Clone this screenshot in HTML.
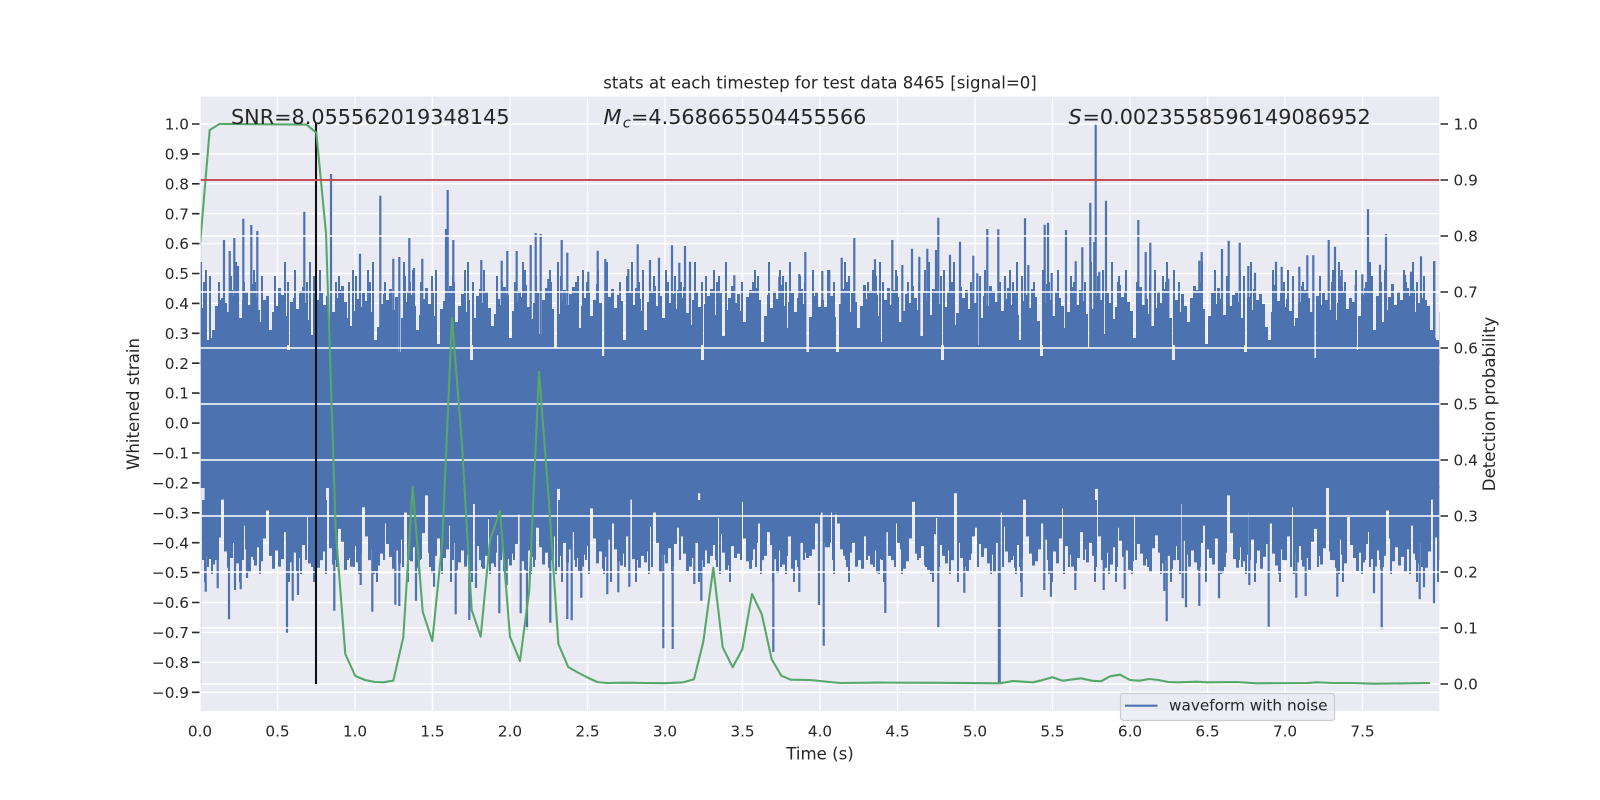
<!DOCTYPE html>
<html>
<head>
<meta charset="utf-8">
<title>stats at each timestep</title>
<style>
html,body{margin:0;padding:0;background:#fff;width:1600px;height:800px;overflow:hidden}
svg{display:block}
text{font-family:"DejaVu Sans","Liberation Sans",sans-serif;fill:#262626}
.t{font-size:15.28px}
.l{font-size:16.6px}
.b{font-size:20.77px}
.i{font-style:italic}
</style>
</head>
<body>
<svg xmlns="http://www.w3.org/2000/svg" width="1600" height="800" viewBox="0 0 1600 800">
<defs>
<clipPath id="ax"><rect x="200.7" y="96.6" width="1238.6" height="614.4"/></clipPath>
<path id="env" d="M0 365V308h3V312h3V340h3V338h3V330h3V306h3V300h3V298h3V303h3V312h3V290h3V296h3V288h3V318h3V300h3V292h3V305h3V284h3V297h3V310h3V322h3V300h3V296h3V330h3V312h3V306h3V288h3V295h3V316h3V350h3V302h3V298h3V309h3V291h3V287h3V303h3V320h3V335h3V310h3V300h3V293h3V305h3V296h3V358h3V312h3V298h3V290h3V286h3V302h3V318h3V326h3V311h3V299h3V307h3V293h3V301h3V285h3V312h3V340h3V327h3V304h3V294h3V300h3V289h3V310h3V297h3V352h3V318h3V302h3V291h3V295h3V306h3V330h3V315h3V299h3V288h3V304h3V293h3V316h3V344h3V309h3V301h3V290h3V286h3V298h3V322h3V306h3V294h3V312h3V300h3V362h3V318h3V296h3V289h3V303h3V292h3V308h3V326h3V314h3V299h3V305h3V287h3V295h3V338h3V311h3V302h3V291h3V297h3V285h3V307h3V319h3V303h3V293h3V334h3V300h3V288h3V296h3V309h3V348h3V314h3V301h3V290h3V305h3V294h3V287h3V312h3V328h3V306h3V298h3V292h3V316h3V300h3V284h3V303h3V356h3V321h3V297h3V289h3V308h3V295h3V301h3V340h3V315h3V293h3V305h3V288h3V299h3V311h3V330h3V302h3V291h3V286h3V306h3V296h3V318h3V345h3V303h3V294h3V309h3V290h3V298h3V287h3V313h3V325h3V300h3V292h3V307h3V366h3V304h3V296h3V289h3V315h3V301h3V293h3V336h3V310h3V298h3V286h3V303h3V294h3V311h3V322h3V297h3V290h3V305h3V288h3V300h3V342h3V316h3V295h3V308h3V291h3V299h3V285h3V306h3V328h3V302h3V293h3V312h3V298h3V289h3V304h3V352h3V317h3V296h3V292h3V307h3V300h3V365Z"/>
</defs>
<rect x="0" y="0" width="1600" height="800" fill="#fff"/>
<rect x="200.7" y="96.6" width="1238.6" height="614.4" fill="#eaeaf2"/>
<!-- left axes grid -->
<g clip-path="url(#ax)">
<path stroke="#fff" stroke-width="1.39" fill="none" d="M277.5 96V712M355 96V712M432.5 96V712M510 96V712M587.5 96V712M665 96V712M742.5 96V712M820 96V712M897.5 96V712M975 96V712M1052.5 96V712M1130 96V712M1207.5 96V712M1285 96V712M1362.5 96V712
M200 124H1440M200 153.9H1440M200 183.8H1440M200 213.7H1440M200 243.6H1440M200 273.5H1440M200 303.4H1440M200 333.3H1440M200 363.2H1440M200 393.1H1440M200 423.1H1440M200 453H1440M200 482.9H1440M200 512.8H1440M200 542.7H1440M200 572.6H1440M200 602.5H1440M200 632.4H1440M200 662.3H1440M200 692.3H1440"/>
<!-- waveform -->
<rect x="200" y="360" width="1240" height="128" fill="#4c72b0"/>
<g fill="#4c72b0">
<use href="#env" transform="translate(200 0)"/>
<use href="#env" transform="translate(1445 0) scale(-1 1)"/>
<use href="#env" transform="translate(830 0) translate(0 423) scale(-1 -1.08) translate(0 -423)"/>
<use href="#env" transform="translate(825 0) translate(0 423) scale(1 -1.08) translate(0 -423)"/>
</g>
<!-- mid-height columns, top -->
<g fill="none" stroke="#4c72b0">
<path stroke-width="83" stroke-dasharray="2 33 2 47 2 23 2 61 2 29 2 41 2 19 2 53" d="M200 303.5H1440"/>
<path stroke-width="75" stroke-dasharray="2 27 2 17 2 39 2 23 2 31 2 13 2 43 2 21" d="M205 307.5H1440"/>
<path stroke-width="69" stroke-dasharray="2 19 2 29 2 11 2 37 2 23 2 15 2 47 2 25" d="M209 310.5H1440"/>
<path stroke-width="63" stroke-dasharray="2 13 2 23 2 9 2 31 2 17 2 27 2 11 2 19" d="M203 313.5H1440"/>
<!-- mid-length columns, bottom -->
<path stroke-width="60" stroke-dasharray="2 13 2 23 2 9 2 31 2 17 2 27 2 11 2 19" d="M202 530H1440"/>
<path stroke-width="67" stroke-dasharray="2 19 2 29 2 11 2 37 2 23 2 15 2 47 2 25" d="M207 533.5H1440"/>
<path stroke-width="74" stroke-dasharray="2 27 2 17 2 39 2 23 2 31 2 13 2 43 2 21" d="M211 537H1440"/>
<path stroke-width="82" stroke-dasharray="2 33 2 47 2 23 2 61 2 29 2 41 2 19 2 53" d="M204 541H1440"/>
</g>
<path fill="none" stroke="#4c72b0" stroke-width="2.2" d="M331 423V174M380.3 423V195.7M447.7 423V190M446 423V229M453.3 423V240M243.3 423V218.7M251.3 423V225M257.3 423V231M304.3 423V211.7M224 423V240M234.3 423V238M229.7 423V251M238 423V266M360 423V253.7M409.3 423V238M422.3 423V258.7M414 423V268M393.3 423V258.7M399.3 423V257M530.7 423V245M535.7 423V233M481.3 423V260M501.7 423V260.7M507.3 423V251M516.7 423V251
M540.7 423V234M561.7 423V240M567.3 423V252.7M548.3 423V279M597.7 423V250.7M605.3 423V259M588.3 423V271.7M628.3 423V269M637.7 423V244.3M650 423V260M659 423V257.7M672 423V245.3M685 423V246M679.3 423V262.7M690 423V261.7M734.3 423V275.3M779.3 423V276.7M805.3 423V252M799.3 423V274M822.3 423V271M829.3 423V270M841.7 423V257.7M854.3 423V238M875 423V259.3M892.3 423V240M902.3 423V265M912 423V248.7M919.3 423V256.7M927.3 423V248.7M938.3 423V217.7M936 423V250M950 423V254.7M960 423V241.7M973.3 423V255.7M987.3 423V229M998.3 423V229.3M977.3 423V273.3M1005 423V278.7
M1025 423V218.3M1044.7 423V224.7M1048 423V222.7M1066 423V230M1051.7 423V273M1028.3 423V265M1075.7 423V261.3M1082.3 423V247.3M1090.3 423V202.7M1095.7 423V123.3M1094.3 423V242M1106 423V200.7M1099.3 423V271.7M1138.3 423V220M1145.7 423V252M1150.3 423V242.7M1168.3 423V278.7M1201.7 423V252M1199.3 423V260.7M1222 423V249M1228.7 423V240.7M1239.7 423V242.7M1248.3 423V266M1255 423V272.7M1276 423V261.7M1281.7 423V266.7M1299.3 423V266.7M1307.3 423V255.3M1313.3 423V255.3M1328.7 423V240M1335 423V246.7M1341.7 423V270M1355.7 423V284.7M1362.3 423V274.3M1368 423V209.3M1380 423V264.7M1386 423V234M1421 423V256.3M1434.3 423V261M1405 423V275M1411 423V271.7
M205.7 423V591.7M210 423V559M229 423V619.3M217.7 423V588.3M235 423V590M240.7 423V589.3M247 423V578M287 423V632.7M292.7 423V600.7M298 423V595M334.3 423V610.7M372.3 423V611.7M360.7 423V585M395.3 423V604.7M399.3 423V606M416 423V600.7M434 423V586.7M455.7 423V614.3M469.3 423V620M476 423V588M499.3 423V613.3M520.7 423V613.3M527 423V629.3M506.7 423V585
M550.3 423V622.7M567.3 423V619M571.7 423V620.3M581.3 423V597.7M607.3 423V594.3M618.3 423V592.3M629.3 423V586.7M663.3 423V648.3M672.7 423V649M701.3 423V600.7M694.3 423V584M773.3 423V652M799.3 423V592M819 423V605M823.7 423V645.7M885.3 423V613M938.3 423V627.3M964.3 423V592.7M1021.7 423V597
M1044.3 423V590M1051 423V596.7M1075.3 423V590M1103.7 423V590M1124.7 423V589.3M1164.3 423V591M1166.7 423V621.3M1182.7 423V598.3M1186 423V607.3M1199.3 423V606M1219 423V598.3M1249.3 423V585M1268.7 423V626.7M1296.3 423V597.7M1305.7 423V596M1337.3 423V596.7M1374 423V593.3M1381.7 423V629.3M1419.7 423V599.3M1424 423V587.3M1434 423V603.3"/>
<rect x="200.7" y="245" width="1" height="439" fill="#4c72b0" opacity="0.15"/>
<path d="M999.3 423V683.5" stroke="#4c72b0" stroke-width="3" fill="none"/>
<!-- right axes grid -->
<path stroke="#fff" stroke-width="1.39" fill="none" d="M200 124H1440M200 180H1440M200 236H1440M200 292H1440M200 348H1440M200 404H1440M200 460H1440M200 516H1440M200 572H1440M200 628H1440M200 684H1440"/>
<!-- black marker, probability curve, threshold -->
<path d="M316 123V684" stroke="#111" stroke-width="2.08" fill="none"/>
<polyline fill="none" stroke="#55a868" stroke-width="2.08" stroke-linejoin="round" points="200,245 209.7,130 219.4,124 229,124 306.5,124.6 316.3,132.7 326,233 335.7,530 345.3,654 355.3,676 365,680 375,682 383,682.3 393.3,680.7 403.3,637.3 412.7,486.7 422.7,611.7 432.3,641 442.2,543 452,318 461.7,440 471.7,610 480.7,636.7 490,540 500,511 510,636.7 520,661 529.3,590 539,372 548.8,499 558.4,644 568.2,667 577.9,672.5 587.5,677.5 597.3,682 607,683 626,682.7 646,683 665,683.2 683.3,682.3 694,679.3 703.3,641.7 713.3,567.7 722.7,647.3 732.7,667.3 742.3,649.3 752,594 761.7,614 771.7,659.3 781.3,675.7 790.7,679.7 810,680 830,682 840,683 880,682.6 940,682.8 1000,683.3 1013,681 1033,682.3 1040,680.7 1052.3,677.3 1062.7,680.7 1081,678.3 1091.7,680.7 1101,681.3 1110,676.3 1120,674.7 1130,680 1139.3,680.7 1149.3,679 1158.3,680 1168.3,682 1178.3,682.3 1196.7,681.7 1206.7,682.3 1236.7,682 1256.7,683.3 1306.7,683 1316.7,682.3 1333.3,683 1353,683 1373,683.7 1430,683"/>
<path d="M200 180H1440" stroke="#c44e52" stroke-width="2.08" fill="none"/>
</g>
<!-- ticks -->
<path stroke="#262626" stroke-width="1.6" fill="none" d="M192 124H199.5M192 153.9H199.5M192 183.8H199.5M192 213.7H199.5M192 243.6H199.5M192 273.5H199.5M192 303.4H199.5M192 333.3H199.5M192 363.2H199.5M192 393.1H199.5M192 423.1H199.5M192 453H199.5M192 482.9H199.5M192 512.8H199.5M192 542.7H199.5M192 572.6H199.5M192 602.5H199.5M192 632.4H199.5M192 662.3H199.5M192 692.3H199.5
M1440.5 124H1448M1440.5 180H1448M1440.5 236H1448M1440.5 292H1448M1440.5 348H1448M1440.5 404H1448M1440.5 460H1448M1440.5 516H1448M1440.5 572H1448M1440.5 628H1448M1440.5 684H1448"/>
<!-- left tick labels -->
<g class="t" text-anchor="end">
<text x="189" y="129.6">1.0</text>
<text x="189" y="159.5">0.9</text>
<text x="189" y="189.4">0.8</text>
<text x="189" y="219.3">0.7</text>
<text x="189" y="249.2">0.6</text>
<text x="189" y="279.1">0.5</text>
<text x="189" y="309">0.4</text>
<text x="189" y="338.9">0.3</text>
<text x="189" y="368.8">0.2</text>
<text x="189" y="398.7">0.1</text>
<text x="189" y="428.7">0.0</text>
<text x="189" y="458.6">−0.1</text>
<text x="189" y="488.5">−0.2</text>
<text x="189" y="518.4">−0.3</text>
<text x="189" y="548.3">−0.4</text>
<text x="189" y="578.2">−0.5</text>
<text x="189" y="608.1">−0.6</text>
<text x="189" y="638">−0.7</text>
<text x="189" y="667.9">−0.8</text>
<text x="189" y="697.9">−0.9</text>
</g>
<!-- right tick labels -->
<g class="t">
<text x="1453.5" y="129.6">1.0</text>
<text x="1453.5" y="185.6">0.9</text>
<text x="1453.5" y="241.6">0.8</text>
<text x="1453.5" y="297.6">0.7</text>
<text x="1453.5" y="353.6">0.6</text>
<text x="1453.5" y="409.6">0.5</text>
<text x="1453.5" y="465.6">0.4</text>
<text x="1453.5" y="521.6">0.3</text>
<text x="1453.5" y="577.6">0.2</text>
<text x="1453.5" y="633.6">0.1</text>
<text x="1453.5" y="689.6">0.0</text>
</g>
<!-- x tick labels -->
<g class="t" text-anchor="middle">
<text x="200" y="736.5">0.0</text>
<text x="277.5" y="736.5">0.5</text>
<text x="355" y="736.5">1.0</text>
<text x="432.5" y="736.5">1.5</text>
<text x="510" y="736.5">2.0</text>
<text x="587.5" y="736.5">2.5</text>
<text x="665" y="736.5">3.0</text>
<text x="742.5" y="736.5">3.5</text>
<text x="820" y="736.5">4.0</text>
<text x="897.5" y="736.5">4.5</text>
<text x="975" y="736.5">5.0</text>
<text x="1052.5" y="736.5">5.5</text>
<text x="1130" y="736.5">6.0</text>
<text x="1207.5" y="736.5">6.5</text>
<text x="1285" y="736.5">7.0</text>
<text x="1362.5" y="736.5">7.5</text>
</g>
<!-- labels -->
<text class="l" x="820" y="88.5" text-anchor="middle">stats at each timestep for test data 8465 [signal=0]</text>
<text class="l" x="820" y="759.5" text-anchor="middle">Time (s)</text>
<text class="l" text-anchor="middle" transform="translate(139 404) rotate(-90)">Whitened strain</text>
<text class="l" text-anchor="middle" transform="translate(1495 404) rotate(-90)">Detection probability</text>
<!-- annotations -->
<text class="b" x="231" y="124">SNR=8.055562019348145</text>
<text class="b i" x="603.5" y="124">M</text>
<text class="i" x="622.8" y="127.5" font-size="14.5">c</text>
<text class="b" x="631" y="124">=4.568665504455566</text>
<text class="b i" x="1068.5" y="124">S</text>
<text class="b" x="1082.5" y="124">=0.0023558596149086952</text>
<!-- legend -->
<rect x="1120.5" y="693.5" width="214" height="27" rx="3" ry="3" fill="#eaeaf2" fill-opacity="0.8" stroke="#cccccc" stroke-width="1.2"/>
<path d="M1125 705.7H1157.5" stroke="#4c72b0" stroke-width="2.08" fill="none"/>
<text class="t" x="1169" y="710.7">waveform with noise</text>
</svg>
</body>
</html>
